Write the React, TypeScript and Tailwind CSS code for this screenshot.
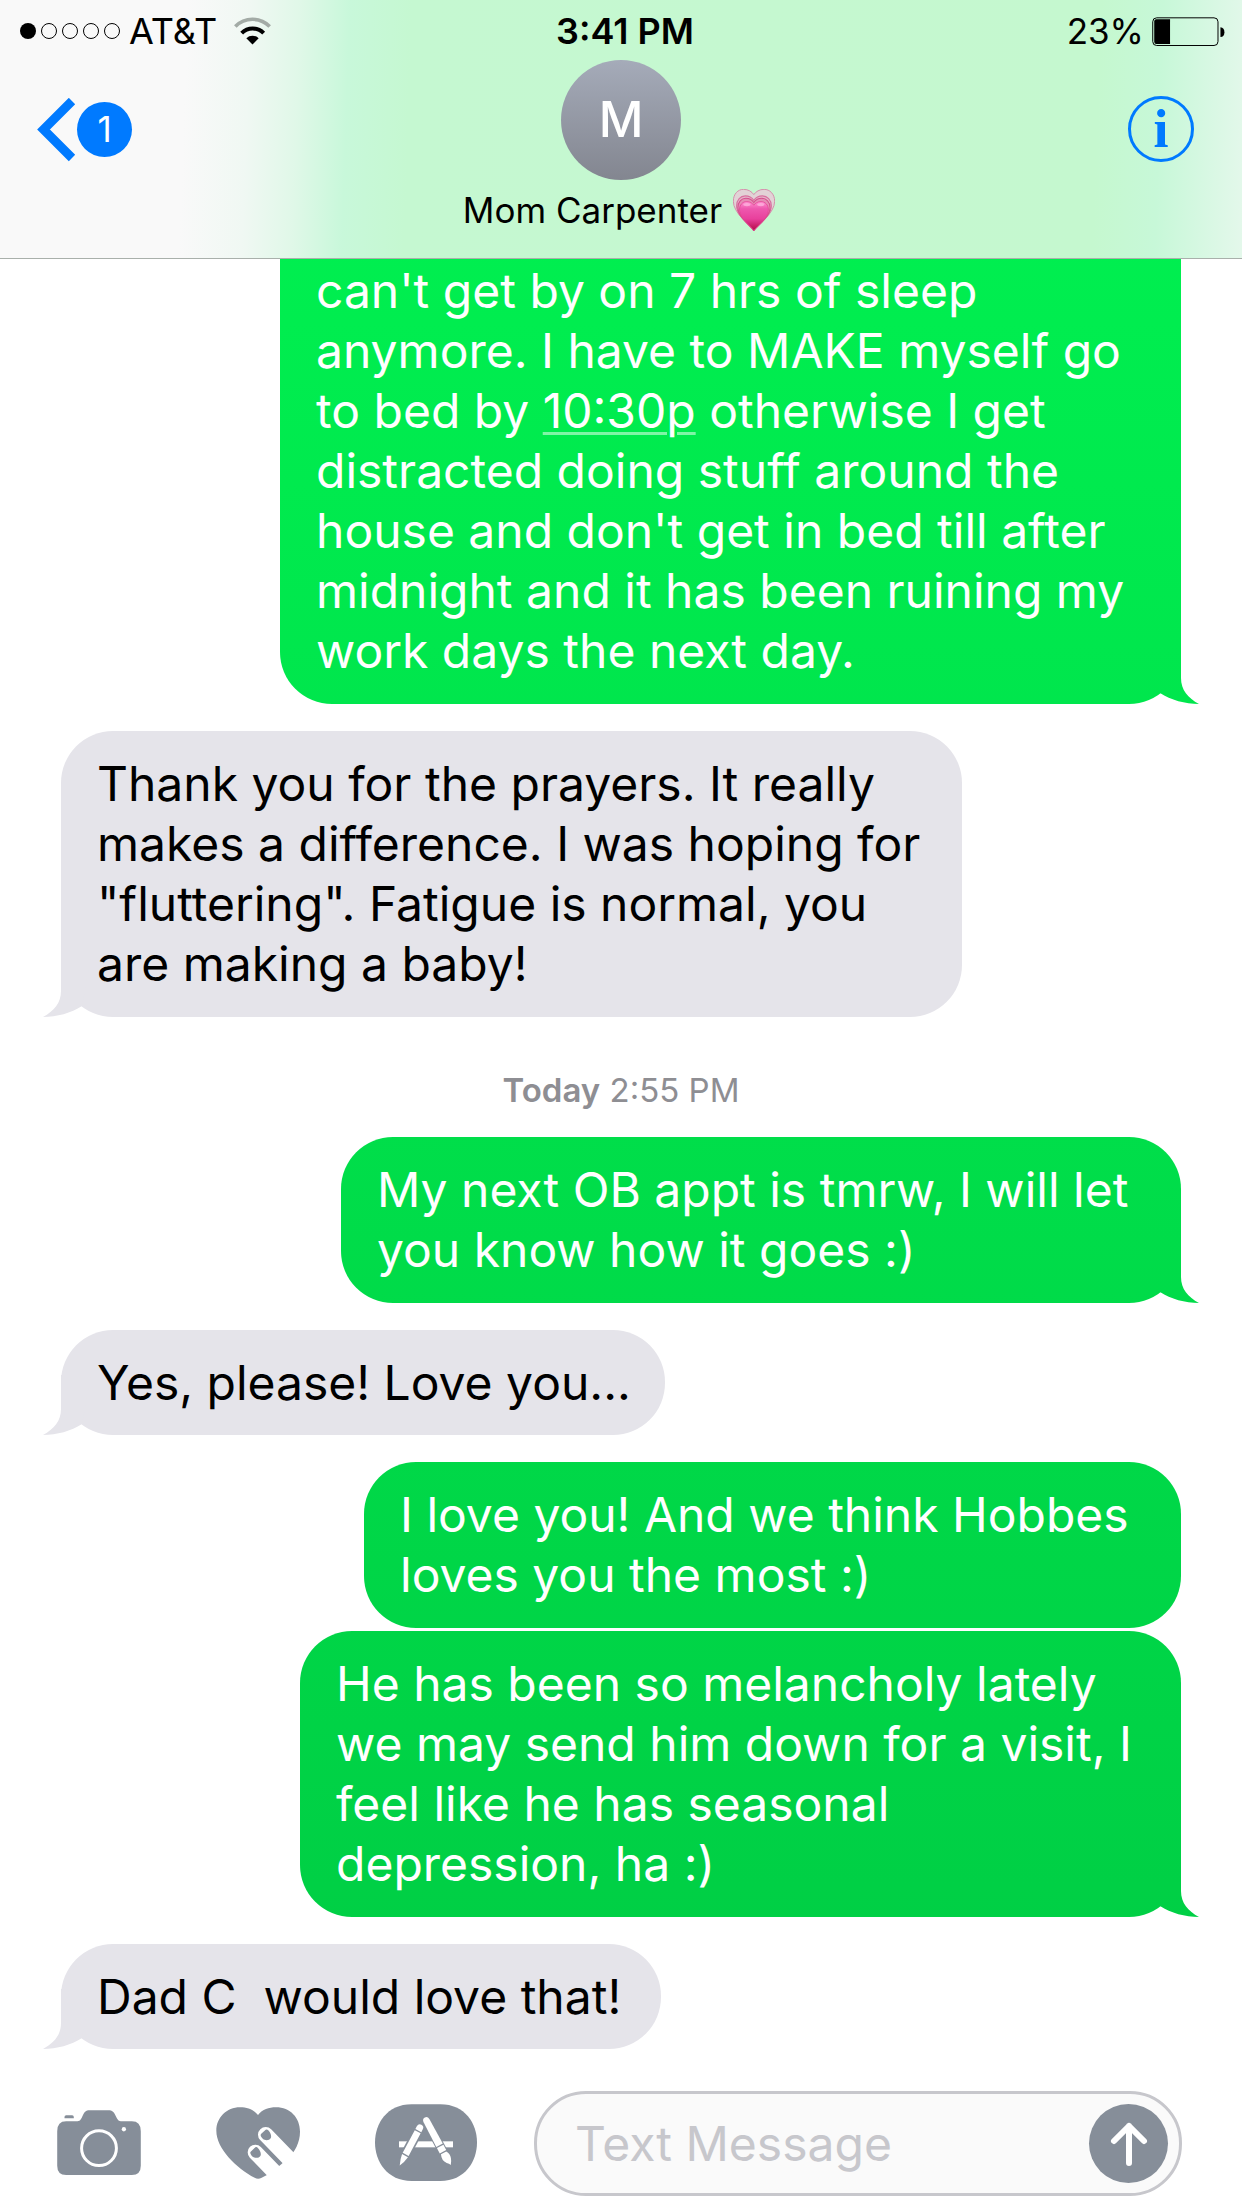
import type { ReactNode } from "react";

function Wifi() {
  return (
    <svg viewBox="702 47 111 83" className="h-7 w-[37px]" aria-label="Wi-Fi" role="img" fill="none">
      <path d="M706 75 A72 72 0 0 1 809 75" stroke="#a3aba6" strokeWidth="11" />
      <path d="M725 95 A46 46 0 0 1 791 95" stroke="#000" strokeWidth="12" />
      <path d="M739 110 A27 27 0 0 1 776 110 L757.500 129 Z" fill="#000" />
    </svg>
  );
}

function Battery() {
  return (
    <svg viewBox="936 47 220 88" className="h-[29px] w-[73px]" aria-hidden="true">
      <rect x="937.500" y="49.500" width="198" height="84" rx="12" fill="none" stroke="#000" strokeWidth="3" />
      <path d="M948 54 H990 V129 H948 Q942 129 942 122 V61 Q942 54 948 54 Z" />
      <path d="M1143 78 Q1155 80 1155 93 Q1155 106 1143 108 Z" />
    </svg>
  );
}

function PinkHeart() {
  const heart =
    "M1005 693 C990 672 943 640 943 604 C943 582 957 568 974 568 C988 568 999 575 1005 584 C1011 575 1022 568 1036 568 C1053 568 1068 582 1068 604 C1068 640 1020 672 1005 693 Z";
  return (
    <svg viewBox="942 567 127 127" className="size-[42px]" role="img" aria-label="Growing heart">
      <defs>
        <linearGradient id="heartFill" x1="0" y1="0" x2="0" y2="1">
          <stop offset="0" stopColor="#ff8fd0" />
          <stop offset="0.25" stopColor="#ee58ae" />
          <stop offset="0.6" stopColor="#e8409c" />
          <stop offset="1" stopColor="#b30a45" />
        </linearGradient>
      </defs>
      <path d={heart} fill="#e2d3d6" stroke="#d58fab" strokeWidth="3" />
      <g transform="translate(1005 692) scale(0.84) translate(-1005 -692)">
        <path d={heart} fill="#e6b3c8" stroke="#d8709f" strokeWidth="4" />
      </g>
      <g transform="translate(1005 692) scale(0.78) translate(-1005 -692)">
        <path d={heart} fill="#e58cb5" stroke="#d4508c" strokeWidth="4" />
      </g>
      <g transform="translate(1005 691) scale(0.7) translate(-1005 -691)">
        <path d={heart} fill="url(#heartFill)" stroke="#e0408f" strokeWidth="3" />
      </g>
      <ellipse cx="984" cy="614" rx="11" ry="5" fill="#ffc4e6" opacity="0.6" />
      <ellipse cx="1026" cy="614" rx="11" ry="5" fill="#ffc4e6" opacity="0.6" />
    </svg>
  );
}

function CameraIcon() {
  return (
    <svg viewBox="171 116 252 196" className="h-[65px] w-[84px]" fill="#868e99" aria-hidden="true">
      <path d="M198 150 H228 C240 150 242 145 246 137 C253 122 256 117 270 117 H324 C338 117 342 122 349 137 C353 145 356 150 366 150 H396 Q423 150 423 180 V284 Q423 312 396 312 H198 Q171 312 171 284 V180 Q171 150 198 150 Z" />
      <path d="M193 141 V137 Q193 132 198 132 H216 Q221 132 221 137 V141 Z" />
      <circle cx="297" cy="231" r="52.500" fill="none" stroke="#fff" strokeWidth="9" />
      <circle cx="372" cy="174" r="6.500" fill="#fff" />
    </svg>
  );
}

function TouchHeartIcon() {
  return (
    <svg viewBox="648 113 252 216" className="h-[72px] w-[84px]" fill="#868e99" aria-hidden="true">
      <path d="M774 137 C788 120 806 114 828 114 C870 114 900 145 900 187 C900 250 840 300 785 325 Q774 331 764 325 C710 297 649 238 649 184 C649 145 680 114 720 114 C742 114 760 120 774 137 Z" />
      <g stroke="#fff" strokeWidth="46" strokeLinecap="round">
        <path d="M797 196 L925 328" />
        <path d="M766 249 L890 377" />
      </g>
      <path d="M849 280 L835 292 L850 345 L920 345 L920 280 Z" fill="#fff" />
      <path d="M783 194 L797 181 Q801 179 804 182 C814 192 815 203 812 207 C808 214 795 214 789 209 C783 203 780 197 783 194 Z" />
      <path d="M752 247 L766 234 Q770 232 773 235 C783 245 784 256 781 260 C777 267 764 267 758 262 C752 256 749 250 752 247 Z" />
    </svg>
  );
}

function AppStoreIcon() {
  return (
    <svg viewBox="1125 101 306 231" className="h-[77px] w-[102px]" aria-hidden="true">
      <path
        d="M1235 102 H1321 C1395 102 1431 160 1431 216.500 C1431 273 1395 332 1321 332 H1235 C1161 332 1125 273 1125 216.500 C1125 160 1161 102 1235 102 Z"
        fill="#868e99"
      />
      <rect x="1197" y="213" width="162" height="18" fill="#fff" />
      <g transform="translate(1232 224) rotate(28)">
        <path d="M-15 -52 H15 V50 H-15 Z" fill="#868e99" />
        <path d="M-10 -49 V-58 Q-10 -69 0 -69 Q10 -69 10 -58 V-49 Z" fill="#fff" />
        <path d="M-10 -45 H10 V32 H-10 Z" fill="#fff" />
        <path d="M-10 36 H10 Q8 52 0 70 Q-8 52 -10 36 Z" fill="#fff" />
      </g>
      <g transform="translate(1313 214) rotate(-28)">
        <path d="M-14 -82 H14 V60 H-14 Z" fill="#868e99" />
        <path d="M-10 -72 Q-9 -82 0 -82 Q9 -82 10 -72 L11 12 H-11 Z" fill="#fff" />
        <path d="M-11 16 H11 V34 H-11 Z" fill="#fff" />
        <path d="M-9 38 H9 Q16 50 12 62 Q9 72 2 80 Q0 74 -6 69 Q-17 56 -9 38 Z" fill="#fff" />
      </g>
    </svg>
  );
}

function SentTail() {
  return (
    <span
      aria-hidden="true"
      className="absolute -right-[18px] bottom-0 h-[60px] w-[58px] bg-[linear-gradient(#00f351,#00ca43)] bg-fixed [clip-path:path('M40_0_V34_C40_46_47_54_58_60_C44_60_30_56_19_49_L10_0_Z')]"
    />
  );
}

function ReceivedTail() {
  return (
    <span
      aria-hidden="true"
      className="absolute -left-[18px] bottom-0 h-[60px] w-[58px] bg-[#e5e4ea] [clip-path:path('M18_0_V34_C18_46_11_54_0_60_C14_60_28_56_39_49_L48_0_Z')]"
    />
  );
}

function Lines({ children }: { children: ReactNode[] }) {
  return (
    <>
      {children.map((line, i) => (
        <span key={i} className="block whitespace-pre">
          {line}
        </span>
      ))}
    </>
  );
}

function Sent({ lines, size, tail = true }: { lines: ReactNode[]; size: string; tail?: boolean }) {
  return (
    <li
      className={`relative self-end bg-[linear-gradient(#00f351,#00ca43)] bg-fixed pb-[23px] pl-9 text-white ${size}`}
    >
      <Lines>{lines}</Lines>
      {tail && <SentTail />}
    </li>
  );
}

function Received({ lines, size }: { lines: ReactNode[]; size: string }) {
  return (
    <li className={`relative self-start rounded-[52px] bg-[#e5e4ea] pt-[23px] pl-9 text-black ${size}`}>
      <Lines>{lines}</Lines>
      <ReceivedTail />
    </li>
  );
}

export default function App() {
  return (
    <div className="flex min-h-screen flex-col bg-white font-['Inter',sans-serif] text-black">
      <header className="border-b border-[#a9b0ab] bg-[linear-gradient(92deg,#f9f9f9_15%,#f0f8f3_20%,#e0f8e8_24%,#c8f8da_28%,#c5f8d1_33%,#c5f8cf_88%,#c7f8d8_93%,#e4f8eb_100%)]">
        <div className="grid h-[60px] grid-cols-3 items-start pt-[10px] text-[35px] leading-[42px]">
          <div className="flex items-center pl-5">
            <div className="flex gap-[5px]" role="img" aria-label="Signal: 1 of 5">
              <i className="size-4 rounded-full bg-black" />
              <i className="size-4 rounded-full border border-black" />
              <i className="size-4 rounded-full border border-black" />
              <i className="size-4 rounded-full border border-black" />
              <i className="size-4 rounded-full border border-black" />
            </div>
            <span className="ml-[9px] text-[36px]">AT&amp;T</span>
            <span className="ml-[17px]">
              <Wifi />
            </span>
          </div>
          <div className="pl-2 text-center text-[36px] font-semibold">3:41 PM</div>
          <div className="flex items-center justify-end gap-2 pr-[17px]">
            <span>23%</span>
            <Battery />
          </div>
        </div>
        <nav className="grid h-[198px] grid-cols-3 items-start">
          <a href="#conversations" aria-label="Back, 1 unread" className="mt-9 flex h-[67px] items-center pl-9">
            <svg viewBox="0 0 40 64" className="h-16 w-10" fill="none" stroke="#007aff" strokeWidth="9" aria-hidden="true">
              <path d="M36 3 L7.500 31.500 L36 60" />
            </svg>
            <span className="ml-px flex size-[55px] items-center justify-center rounded-full bg-[#007aff] text-[35px] text-white">
              1
            </span>
          </a>
          <div className="flex flex-col items-center">
            <div className="flex size-[120px] items-center justify-center rounded-full bg-linear-to-b from-[#a5abb9] to-[#838690] text-[49px] font-medium text-white">
              M
            </div>
            <h1 className="mt-2 flex items-center gap-[11px] pr-1 text-[35px] leading-[44px] whitespace-nowrap">
              Mom Carpenter <PinkHeart />
            </h1>
          </div>
          <button
            type="button"
            aria-label="Details"
            className="mt-9 mr-12 flex size-[66px] items-center justify-center justify-self-end rounded-full border-3 border-[#007aff] font-['Liberation_Serif',serif] text-[54px] leading-none font-bold text-[#007aff]"
          >
            i
          </button>
        </nav>
      </header>

      <main className="flex-1">
        <ol className="flex flex-col pr-[61px] pl-[61px] text-[48px] leading-[60px]">
          <Sent
            size="w-[901px] rounded-b-[52px] pt-0.5"
            lines={[
              "can't get by on 7 hrs of sleep",
              "anymore. I have to MAKE myself go",
              <>
                to bed by{" "}
                <a href="#event" className="underline decoration-white/50 decoration-3 underline-offset-4">
                  10:30p
                </a>{" "}
                otherwise I get
              </>,
              "distracted doing stuff around the",
              "house and don't get in bed till after",
              "midnight and it has been ruining my",
              "work days the next day.",
            ]}
          />
          <li className="h-[27px]" aria-hidden="true" />
          <Received
            size="w-[901px] pb-[23px]"
            lines={[
              "Thank you for the prayers. It really",
              "makes a difference. I was hoping for",
              '"fluttering". Fatigue is normal, you',
              "are making a baby!",
            ]}
          />
          <li className="pt-[53px] pb-[27px] text-center text-[33px] leading-10 text-[#8e8e93]">
            <time>
              <b className="font-semibold">Today</b> 2:55 PM
            </time>
          </li>
          <Sent
            size="w-[840px] rounded-[52px] pt-[23px]"
            lines={["My next OB appt is tmrw, I will let", "you know how it goes :)"]}
          />
          <li className="h-[27px]" aria-hidden="true" />
          <Received size="w-[604px] pb-[22px]" lines={["Yes, please! Love you..."]} />
          <li className="h-[27px]" aria-hidden="true" />
          <Sent
            size="w-[817px] rounded-[52px] pt-[23px]"
            tail={false}
            lines={["I love you! And we think Hobbes", "loves you the most :)"]}
          />
          <li className="h-[3px]" aria-hidden="true" />
          <Sent
            size="w-[881px] rounded-[52px] pt-[23px]"
            lines={[
              "He has been so melancholy lately",
              "we may send him down for a visit, I",
              "feel like he has seasonal",
              "depression, ha :)",
            ]}
          />
          <li className="h-[27px]" aria-hidden="true" />
          <Received size="w-[600px] pb-[22px]" lines={["Dad C  would love that!"]} />
        </ol>
      </main>

      <form className="flex items-center pt-[42px] pr-[60px] pb-3 pl-[57px]" onSubmit={(e) => e.preventDefault()}>
        <div className="flex items-center gap-[75px] pb-0.5">
          <button type="button" aria-label="Camera">
            <CameraIcon />
          </button>
          <button type="button" aria-label="Digital Touch">
            <TouchHeartIcon />
          </button>
          <button type="button" aria-label="Apps">
            <AppStoreIcon />
          </button>
        </div>
        <div className="ml-[57px] flex h-[105px] min-w-0 flex-1 items-center rounded-[52px] border-3 border-[#c7c7cc] bg-[#fafafa] pr-[11px] pl-[38px]">
          <input
            type="text"
            aria-label="Text Message"
            placeholder="Text Message"
            className="min-w-0 flex-1 bg-transparent text-[48px] leading-[60px] outline-none placeholder:text-[#c7c7cc]"
          />
          <button
            type="submit"
            aria-label="Send"
            className="flex size-[79px] shrink-0 items-center justify-center rounded-full bg-[#868e99]"
          >
            <svg
              viewBox="0 0 40 46"
              className="h-[46px] w-10"
              fill="none"
              stroke="#fff"
              strokeWidth="6"
              strokeLinecap="round"
              strokeLinejoin="round"
              aria-hidden="true"
            >
              <path d="M20 42 V5 M5 20 L20 5 L35 20" />
            </svg>
          </button>
        </div>
      </form>
    </div>
  );
}
